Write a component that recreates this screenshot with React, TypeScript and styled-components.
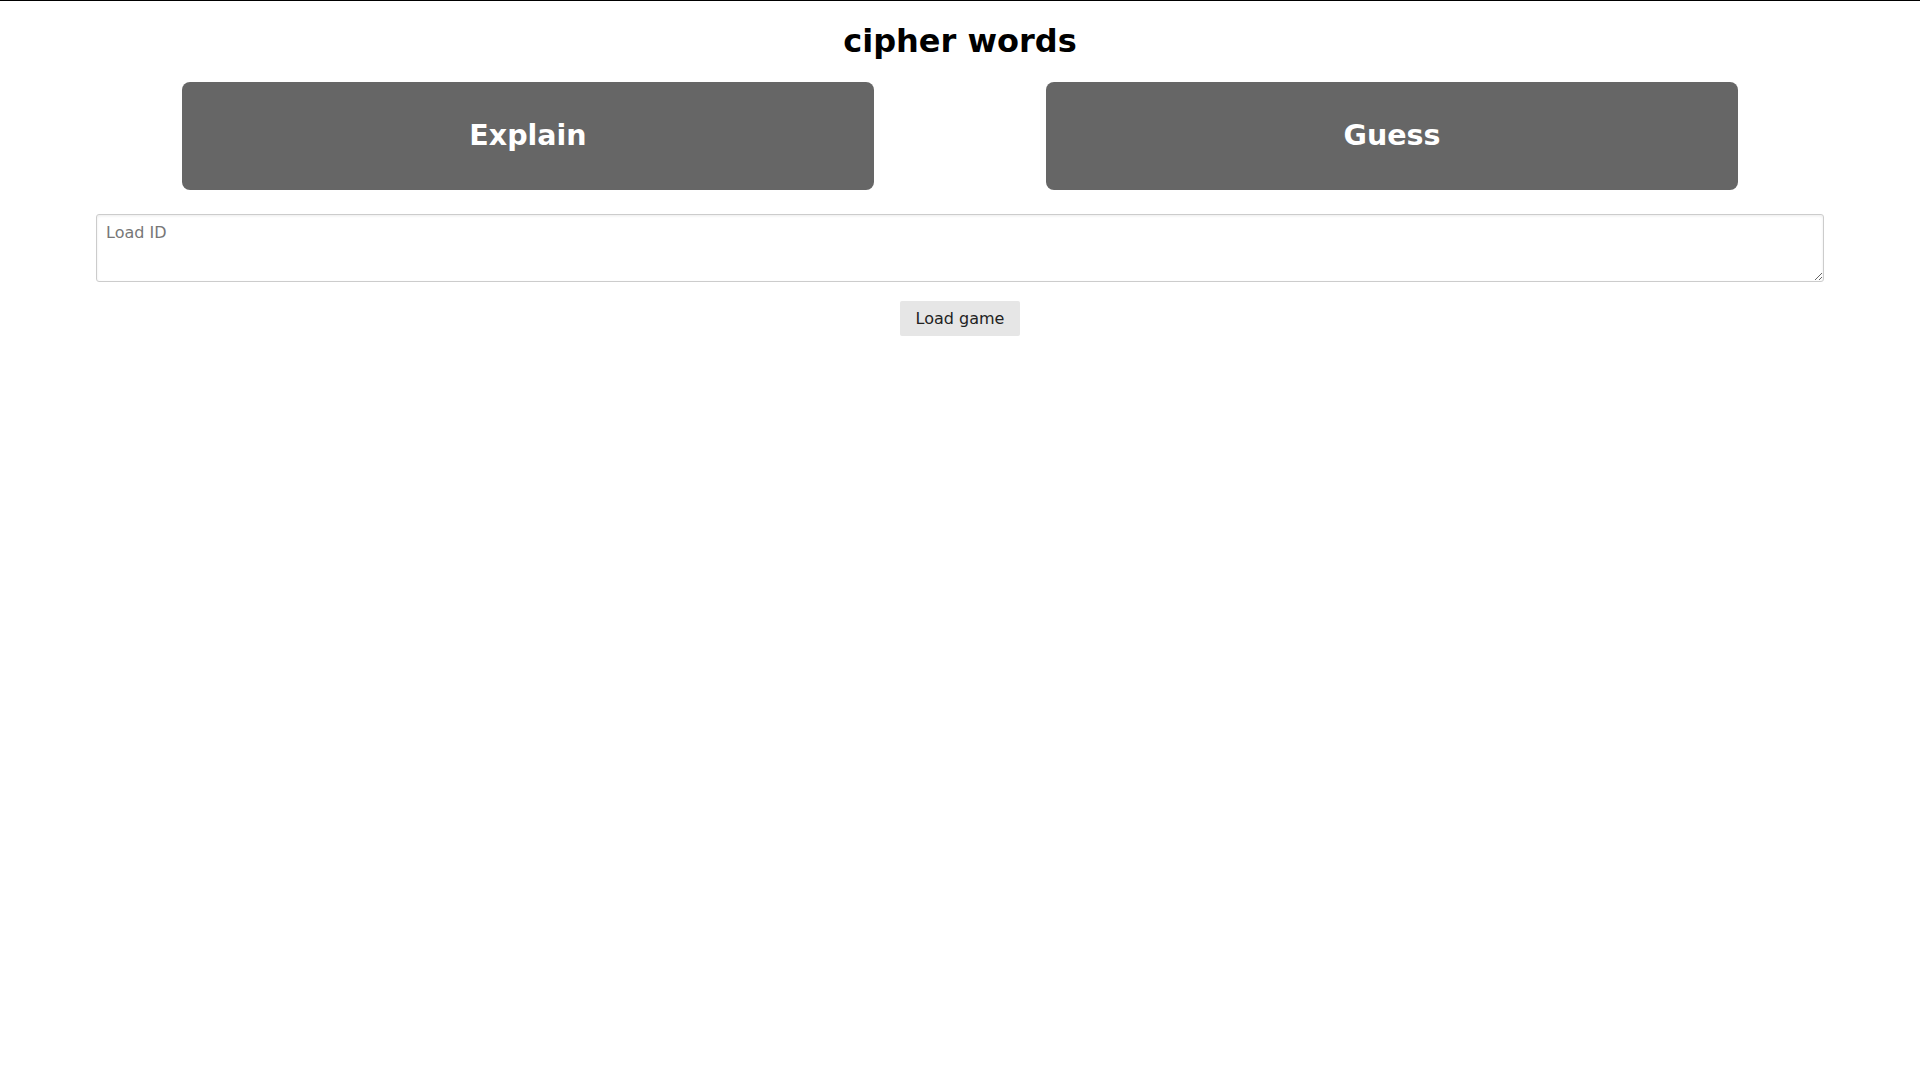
import React from "react";
import styled, { createGlobalStyle } from "styled-components";

const GlobalStyle = createGlobalStyle`
  html, body {
    margin: 0;
    padding: 0;
    background: #ffffff;
    font-family: "DejaVu Sans", "Liberation Sans", sans-serif;
  }
`;

const Page = styled.div`
  border-top: 1px solid #000000;
  min-height: 1079px;
`;

const Title = styled.h1`
  margin: 21.44px 0;
  font-size: 32px;
  font-weight: bold;
  text-align: center;
  color: #000000;
  line-height: normal;
`;

const Container = styled.div`
  width: 90%;
  margin: 0 auto;
  display: flex;
  flex-direction: column;
  align-items: center;
`;

const ModeRow = styled.div`
  width: 100%;
  display: grid;
  grid-template-columns: 1fr 1fr;
`;

const ModeButton = styled.button`
  justify-self: center;
  width: 80%;
  height: 108px;
  border: none;
  border-radius: 8px;
  background: #666666;
  color: #ffffff;
  font-family: "DejaVu Sans", sans-serif;
  font-weight: bold;
  font-size: 28.5px;
  cursor: pointer;
`;

const IdInput = styled.textarea`
  box-sizing: border-box;
  width: 100%;
  height: 68px;
  margin-top: 24px;
  padding: 8px 9px;
  border: 1px solid #cccccc;
  border-radius: 3px;
  box-shadow: inset 0 1px 3px rgba(0, 0, 0, 0.08);
  font-family: "DejaVu Sans", sans-serif;
  font-size: 16px;
  color: #333333;
  &::placeholder {
    color: #777777;
  }
`;

const LoadButton = styled.button`
  margin-top: 19px;
  padding: 8px 16px;
  border: none;
  border-radius: 2px;
  background: #e6e6e6;
  color: #222222;
  font-family: "DejaVu Sans", sans-serif;
  font-size: 16px;
  line-height: 19px;
  cursor: pointer;
`;

export default function App() {
  return (
    <>
      <GlobalStyle />
      <Page>
        <Title>cipher words</Title>
        <Container>
          <ModeRow>
            <ModeButton>Explain</ModeButton>
            <ModeButton>Guess</ModeButton>
          </ModeRow>
          <IdInput placeholder="Load ID" />
          <LoadButton>Load game</LoadButton>
        </Container>
      </Page>
    </>
  );
}
